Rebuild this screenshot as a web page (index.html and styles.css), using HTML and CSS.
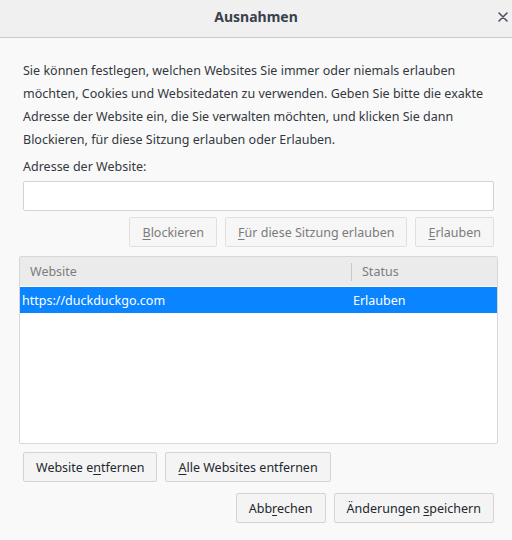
FILE: index.html
```html
<!DOCTYPE html>
<html lang="de">
<head>
<meta charset="utf-8">
<title>Ausnahmen</title>
<link rel="stylesheet" href="styles.css">
</head>
<body>
<div class="dialog">
  <header class="titlebar">
    <span class="title">Ausnahmen</span>
    <button class="close" aria-label="Schließen">
      <svg width="10" height="10" viewBox="0 0 10 10"><path d="M1 1L9 9M9 1L1 9" stroke="#4a5360" stroke-width="1.6" stroke-linecap="round"/></svg>
    </button>
  </header>
  <main class="content">
    <p class="intro">Sie können festlegen, welchen Websites Sie immer oder niemals erlauben möchten, Cookies und Websitedaten zu verwenden. Geben Sie bitte die exakte Adresse der Website ein, die Sie verwalten möchten, und klicken Sie dann Blockieren, für diese Sitzung erlauben oder Erlauben.</p>
    <label class="label" for="url">Adresse der Website:</label>
    <input class="url" id="url" type="text">
    <div class="actions">
      <button class="btn" disabled><u>B</u>lockieren</button>
      <button class="btn" disabled><u>F</u>ür diese Sitzung erlauben</button>
      <button class="btn" disabled><u>E</u>rlauben</button>
    </div>
    <div class="table">
      <div class="thead">
        <div class="col-site">Website</div>
        <div class="col-status">Status</div>
      </div>
      <div class="row selected">
        <div class="col-site">https://duckduckgo.com</div>
        <div class="col-status">Erlauben</div>
      </div>
    </div>
    <div class="remove">
      <button class="btn active">Website e<u>n</u>tfernen</button>
      <button class="btn active"><u>A</u>lle Websites entfernen</button>
    </div>
    <div class="footer">
      <button class="btn active">Abb<u>r</u>echen</button>
      <button class="btn active">Änderungen <u>s</u>peichern</button>
    </div>
  </main>
</div>
</body>
</html>
```
FILE: styles.css
```css
html, body {
  margin: 0;
  padding: 0;
}

body {
  width: 512px;
  height: 540px;
  background: #f9f9f9;
  font-family: "Noto Sans", "Open Sans", sans-serif;
  font-size: 12.5px;
  color: #333840;
  overflow: hidden;
}

.dialog {
  display: flex;
  flex-direction: column;
  height: 540px;
}

.titlebar {
  position: relative;
  height: 38px;
  box-sizing: border-box;
  padding-bottom: 4px;
  background: #f0f0f0;
  border-bottom: 1px solid #c9c9c9;
  display: flex;
  align-items: center;
  justify-content: center;
}

.title {
  font-weight: bold;
  font-size: 14px;
  color: #3a414d;
}

.close {
  position: absolute;
  right: 3px;
  top: 11px;
  width: 12px;
  height: 12px;
  padding: 0;
  border: 0;
  background: none;
  display: flex;
  align-items: center;
  justify-content: center;
}

.content {
  display: flex;
  flex-direction: column;
  padding: 21px 18px 0 23px;
}

.intro {
  margin: 0;
  line-height: 23px;
}

.label {
  margin-top: 4px;
  line-height: 23px;
}

.url {
  margin: 3px 0 0;
  height: 30px;
  box-sizing: border-box;
  border: 1px solid #d3d3d3;
  border-radius: 2px;
  background: #fff;
  font: inherit;
}

.actions {
  margin-top: 6px;
  display: flex;
  justify-content: flex-end;
  gap: 8px;
}

.btn {
  height: 30px;
  box-sizing: border-box;
  padding: 0 12px;
  border: 1px solid #e0e0e0;
  border-radius: 2px;
  background: #f6f6f6;
  font: inherit;
  color: #7b7b7b;
}

.btn.active {
  border-color: #d4d4d4;
  background: #f4f4f4;
  color: #23272e;
}

.btn u {
  text-underline-offset: 2px;
}

.table {
  margin: 9px -4px 0 -4px;
  height: 188px;
  box-sizing: border-box;
  border: 1px solid #d7d7d7;
  border-radius: 2px;
  background: #fff;
  overflow: hidden;
}

.thead {
  display: flex;
  height: 29px;
  align-items: center;
  background: #ebebeb;
  color: #7d7d7d;
}

.thead .col-site {
  padding-left: 10px;
  width: 321px;
  border-right: 1px solid #c8c8c8;
  line-height: 18px;
}

.thead .col-status {
  padding-left: 10px;
}

.row {
  display: flex;
  align-items: center;
  height: 26px;
  margin-top: 1px;
}

.row .col-site {
  padding-left: 2px;
  width: 331px;
}

.row.selected {
  background: #0a84ff;
  color: #fff;
}

.remove {
  margin-top: 8px;
  display: flex;
  gap: 8px;
}

.footer {
  margin-top: 11px;
  display: flex;
  justify-content: flex-end;
  gap: 8px;
}
```
